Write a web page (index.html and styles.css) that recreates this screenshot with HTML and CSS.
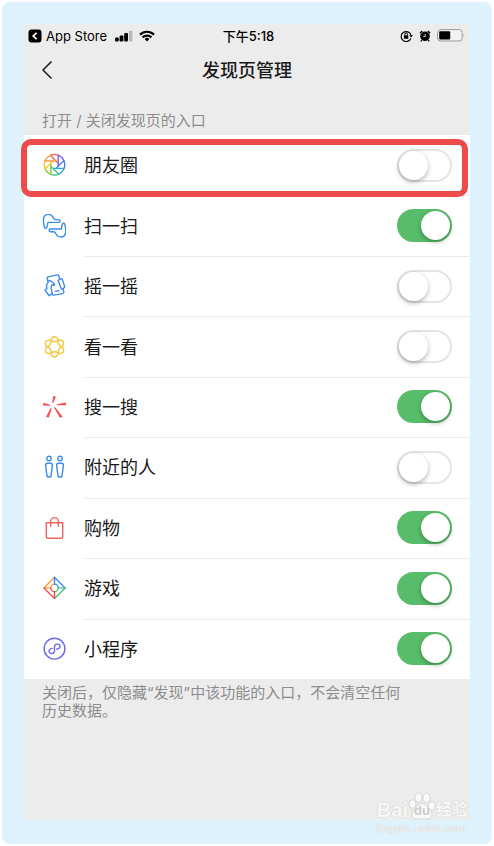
FILE: index.html
```html
<!DOCTYPE html>
<html lang="zh-CN">
<head>
    <meta charset="UTF-8">
    <meta name="viewport" content="width=device-width, initial-scale=1.0">
    <title>发现页管理</title>
    <link rel="stylesheet" href="styles.css">
</head>
<body>
    <div class="marco">
        <div class="pantalla">
            <header>
                <div class="status">
                    <div class="status-left">
                        <svg width="14" height="14" viewBox="0 0 14 14"><rect x="0.5" y="0.5" width="13" height="13" rx="3" fill="#000"/><path d="M8.6 3.8 5.2 7l3.4 3.2" fill="none" stroke="#fff" stroke-width="1.7"/></svg>
                        <span>App Store</span>
                        <svg class="signal" width="18" height="12" viewBox="0 0 18 12"><rect x="0" y="7.5" width="3.8" height="4" rx="1"/><rect x="4.6" y="5.5" width="3.8" height="6" rx="1"/><rect x="9.2" y="3" width="3.8" height="8.5" rx="1"/><rect x="14" y="0.8" width="3.4" height="10.7" rx="1" fill="#b9b9b9"/></svg>
                        <svg width="16" height="12" viewBox="0 0 16 12"><g fill="none" stroke="#000" stroke-width="2.2"><path d="M1 4.6a10 10 0 0 1 14 0"/><path d="M3.6 7.4a6.3 6.3 0 0 1 8.8 0"/></g><path d="M8 11.4 5.6 9a3.4 3.4 0 0 1 4.8 0z"/></svg>
                    </div>
                    <span class="time">下午5:18</span>
                    <div class="status-right">
                        <svg width="13" height="12" viewBox="0 0 13 12"><path d="M10.8 8.5A5 5 0 1 1 11 5.2" fill="none" stroke="#000" stroke-width="1.2"/><path d="M9.2 5.3h3.8l-1.9 2.3z"/><rect x="3.9" y="5.2" width="4.4" height="3.5" rx=".5"/><path d="M4.8 5.4V4.2a1.3 1.3 0 0 1 2.6 0v1.2" fill="none" stroke="#000"/></svg>
                        <svg width="12" height="12" viewBox="0 0 12 12"><circle cx="6" cy="6.3" r="4.8"/><path d="M.9 3.2 3.2 1M11.1 3.2 8.8 1M2.8 10.2l-1 1.2M9.2 10.2l1 1.2" stroke="#000" stroke-width="1.4"/><path d="M6.2 4v2.500H4.200" fill="none" stroke="#fff" stroke-width=".8"/></svg>
                        <svg width="28" height="13" viewBox="0 0 28 13"><rect x="0.6" y="0.6" width="24.6" height="11.4" rx="3" fill="#f2f2f2" stroke="#999"/><rect x="2.2" y="2.2" width="11" height="8.2" rx="1"/><path d="M26.6 4.4q1.4 1.9 0 3.8z" fill="#999"/></svg>
                    </div>
                </div>
                <div class="navbar">
                    <button class="back" aria-label="返回">
                        <svg width="12" height="20" viewBox="0 0 12 20"><path d="M10.500 1.500 2 10l8.500 8.500" fill="none" stroke="#1a1a1a" stroke-width="1.500"/></svg>
                    </button>
                    <h1>发现页管理</h1>
                </div>
            </header>
            <main>
                <h2>打开 / 关闭发现页的入口</h2>
                <ul class="lista">
                    <li class="marcado">
                        <label for="moments">
                            <svg class="icono" viewBox="0 0 24 24">
                                <defs><path id="blade" d="M3.700 1.500V-9.600A10.300 10.300 0 0 1 9.400-4.200"/></defs>
                                <g transform="translate(12.500 11.700)">
                                    <use href="#blade" stroke="#fa5d55" transform="rotate(-45)"/>
                                    <use href="#blade" stroke="#7a62ee"/>
                                    <use href="#blade" stroke="#4c7cf0" transform="rotate(45)"/>
                                    <use href="#blade" stroke="#35a5e8" transform="rotate(90)"/>
                                    <use href="#blade" stroke="#3ec48a" transform="rotate(135)"/>
                                    <use href="#blade" stroke="#8ccb3a" transform="rotate(180)"/>
                                    <use href="#blade" stroke="#f6c52c" transform="rotate(225)"/>
                                    <use href="#blade" stroke="#fb9a4a" transform="rotate(270)"/>
                                </g>
                            </svg>
                            <span>朋友圈</span>
                        </label>
                        <input type="checkbox" class="switch" id="moments">
                    </li>
                    <li>
                        <label for="scan">
                            <svg class="icono azul" viewBox="0 0 24 24">
                                <defs><path id="hand" d="M2.600 13.500C1.800 11 1.200 8 1.500 5.300 1.800 2 4 .4 6.500.4c2.300 0 3.800 1.200 4.800 3.200.6 1.400 1 2 2.400 2h3c1.900 0 1.900 2.800 0 2.800H6c-.7 1.800-.4 3.700-1.300 5.200-.6 1-1.700.9-2.100-.1z"/></defs>
                                <use href="#hand"/>
                                <use href="#hand" transform="rotate(180 12.600 11.700)"/>
                            </svg>
                            <span>扫一扫</span>
                        </label>
                        <input type="checkbox" class="switch" id="scan" checked>
                    </li>
                    <li>
                        <label for="shake">
                            <svg class="icono azul" viewBox="0 0 24 24">
                                <path d="M5.800 7.500 5.300 4.200q-.2-1 .9-1.300L15.400.9q1.200-.2 1.500.8l.5 2.500"/>
                                <path d="m16 6.300 2.800-1.500q1.100-.4 1.500.6l2.300 7q.2 1-.6 1.500l-1.700 1.200q-.8.3-1.200-.5z"/>
                                <path d="m21.200 15.200.6 2.700q.1 1.400-1.100 1.700l-9.200 1.500q-1.100.1-1.500-.9"/>
                                <path d="M7 21.700 3 16l2-1.300-.6-3.200 2.500-4.800q1.100-.4 2 .4l3.200 2.600q1.200 1.100 0 1.800l-2.400-.6-.6 3.300 1.200 5.400z"/>
                                <path d="m13.500 17.400 3.400-.7"/>
                            </svg>
                            <span>摇一摇</span>
                        </label>
                        <input type="checkbox" class="switch" id="shake">
                    </li>
                    <li>
                        <label for="look">
                            <svg class="icono amarillo" viewBox="0 0 24 24">
                                <defs><path id="petal" d="M-1.600-9.600Q0-10.900 1.600-9.600 3.900-8 3.600-6 3.400-4 4.300-2.500 5.200-.9 7-.1 8.900.6 9.100 3.400"/></defs>
                                <g transform="translate(12.500 11.800)">
                                    <use href="#petal"/>
                                    <use href="#petal" transform="rotate(60)"/>
                                    <use href="#petal" transform="rotate(120)"/>
                                    <use href="#petal" transform="rotate(180)"/>
                                    <use href="#petal" transform="rotate(240)"/>
                                    <use href="#petal" transform="rotate(300)"/>
                                </g>
                            </svg>
                            <span>看一看</span>
                        </label>
                        <input type="checkbox" class="switch" id="look">
                    </li>
                    <li>
                        <label for="search">
                            <svg class="icono relleno" viewBox="0 0 24 24">
                                <path d="m11.300.9 2.600.7-2.500 6.200-1.200-.3zM23.900 7.500v2.700l-9 .1-.1-1.100zM1.200 7.800l-.1 2.600 7 .4.200-1.100zM4.100 21.800l2.600 1 3-9.300-1.100-.5zM18.100 22.900l2.400-1.500-7.600-9.500-1 .7z"/>
                            </svg>
                            <span>搜一搜</span>
                        </label>
                        <input type="checkbox" class="switch" id="search" checked>
                    </li>
                    <li>
                        <label for="nearby">
                            <svg class="icono azul" viewBox="0 0 24 24">
                                <circle cx="7" cy="3.500" r="2.200"/><circle cx="18" cy="3.500" r="2.200"/>
                                <path d="M5.400 8.300h3.200q1.900.2 1.800 2L9 21q-.2 1-1.200 1H6.200q-1 0-1.200-1L3.600 10.300q-.1-1.800 1.800-2z"/>
                                <path d="M16.400 8.300h3.200q1.900.2 1.800 2L20 21q-.2 1-1.200 1h-1.600q-1 0-1.200-1l-1.400-10.700q-.1-1.800 1.800-2z"/>
                            </svg>
                            <span>附近的人</span>
                        </label>
                        <input type="checkbox" class="switch" id="nearby">
                    </li>
                    <li>
                        <label for="shop">
                            <svg class="icono rojo" viewBox="0 0 24 24">
                                <path d="M4.300 6.700h16.400v13.800q0 1.800-1.800 1.800H6.100q-1.800 0-1.800-1.800z"/>
                                <path d="M8.700 10.300V5.400a3.800 3.800 0 0 1 7.600 0v4.900"/>
                            </svg>
                            <span>购物</span>
                        </label>
                        <input type="checkbox" class="switch" id="shop" checked>
                    </li>
                    <li>
                        <label for="games">
                            <svg class="icono" viewBox="0 0 24 24">
                                <path stroke="#f79a3e" d="M12.500 1.300 1.900 11.900h6.800a3.800 3.800 0 0 1 3.800-3.800"/>
                                <path stroke="#3c8cf0" d="M23.100 11.900 12.500 1.300v6.800a3.800 3.800 0 0 1 3.800 3.800"/>
                                <path stroke="#45c381" d="m12.500 22.500 10.600-10.600h-6.800a3.800 3.800 0 0 1-3.800 3.800"/>
                                <path stroke="#f1524f" d="m1.900 11.900 10.600 10.600v-6.800a3.800 3.800 0 0 1-3.800-3.800"/>
                            </svg>
                            <span>游戏</span>
                        </label>
                        <input type="checkbox" class="switch" id="games" checked>
                    </li>
                    <li>
                        <label for="mini">
                            <svg class="icono morado" viewBox="0 0 24 24">
                                <circle cx="12.500" cy="11.700" r="10.400"/>
                                <path d="M14.700 12.200c2.300-.2 3.600-1.700 3.300-3.200-.6-2.700-5.500-2.500-5.500.8v4.100c0 3.200-4.900 3.400-5.500.7-.3-1.500 1-3 3.300-3.200"/>
                            </svg>
                            <span>小程序</span>
                        </label>
                        <input type="checkbox" class="switch" id="mini" checked>
                    </li>
                </ul>
                <p class="nota">关闭后，仅隐藏“发现”中该功能的入口，不会清空任何历史数据。</p>
            </main>
        </div>
        <div class="marca">
            <div class="marca-logo">
                <span class="bai">Bai</span>
                <span class="pata">
                    <svg width="28" height="28" viewBox="0 0 28 28"><g fill="#fafafa" stroke="#d6d6d6"><ellipse cx="4.500" cy="12" rx="3.400" ry="4.200"/><ellipse cx="10.500" cy="5.600" rx="3.500" ry="4.700"/><ellipse cx="18.500" cy="6" rx="3.500" ry="4.700"/><ellipse cx="23.700" cy="14" rx="3.400" ry="4.200"/><path d="M14 11.500c3 0 4.500 3 7 5.500 3 3 3.500 5 2.500 7.500-1.200 3-5 2.500-9.500 2.500s-8.300.5-9.500-2.500c-1-2.500-.5-4.500 2.500-7.500 2.500-2.500 4-5.500 7-5.500z"/></g></svg>
                    <b>du</b>
                </span>
                <span class="jingyan">经验</span>
            </div>
            <div class="marca-url">jingyan.baidu.com</div>
        </div>
    </div>
</body>
</html>
```

FILE: styles.css
```css
* {
    box-sizing: border-box;
}
body {
    font-family: Inter, "Noto Sans CJK SC", sans-serif;
    margin: 0;
    padding: 2px;
    min-height: 100vh;
    display: flex;
    background-color: #fff;
    color: #1a1a1a;
}
.marco {
    position: relative;
    flex: 1;
    display: flex;
    padding: 22px 22px 24px;
    border-radius: 8px;
    background-color: #ddf2fd;
}
.pantalla {
    flex: 1;
    background-color: #ececec;
}
/* Barra de estado */
.status {
    display: grid;
    grid-template-columns: 1fr auto 1fr;
    align-items: center;
    height: 23px;
    padding: 0 5px 0 4px;
    font-size: 13px;
    line-height: 20px;
    color: #000;
}
.status-left,
.status-right {
    display: flex;
    align-items: center;
    gap: 4px;
}
.status-right {
    justify-content: flex-end;
    gap: 6px;
}
.signal {
    margin: 0 2px 0 4px;
}
.time {
    padding-left: 4px;
    font-weight: 500;
}
.navbar {
    display: grid;
    grid-template-columns: 48px 1fr 48px;
    align-items: center;
    height: 46px;
}
.back {
    display: flex;
    padding: 0 0 0 17px;
    border: none;
    background: none;
    cursor: pointer;
}
h1 {
    margin: 0;
    padding-top: 2px;
    font-size: 18px;
    line-height: 26px;
    font-weight: 500;
    text-align: center;
}
h2 {
    margin: 0;
    padding: 18px 18px 4px;
    font-size: 15px;
    line-height: 20px;
    font-weight: 400;
    color: #8c8c8c;
}
/* Lista de entradas */
.lista {
    display: grid;
    grid-auto-rows: 1fr;
    min-height: 544px;
    margin: 0;
    padding: 0;
    list-style: none;
    background-color: #fff;
}
.lista li {
    position: relative;
    display: flex;
    align-items: center;
    padding: 0 18px;
}
.lista li + li::before {
    content: "";
    position: absolute;
    top: 0;
    left: 60px;
    right: 0;
    border-top: 1px solid #ebebeb;
}
.lista label {
    flex: 1;
    display: flex;
    align-items: center;
    gap: 18px;
    font-size: 18px;
    line-height: 26px;
}
.lista label span {
    padding-top: 2px;
}
/* Recuadro rojo sobre la primera fila */
.marcado::after {
    content: "";
    position: absolute;
    z-index: 1;
    top: 4px;
    right: 2px;
    bottom: -2px;
    left: -3px;
    border: 6px solid #ee4b4a;
    border-radius: 10px;
    pointer-events: none;
}
.icono {
    width: 24px;
    height: 24px;
    fill: none;
    stroke-width: 1.4;
    stroke-linejoin: round;
    stroke-linecap: round;
}
.azul {
    stroke: #3d8bea;
}
.amarillo {
    stroke: #f7c43a;
}
.rojo {
    stroke: #f0625f;
}
.morado {
    stroke: #6c6cec;
}
.relleno {
    fill: #f0524f;
}
.switch {
    appearance: none;
    width: 55px;
    height: 33px;
    margin: 0;
    padding: 0;
    border: 2px solid #e4e4e4;
    border-radius: 17px;
    background-color: #fff;
    cursor: pointer;
}
.switch::before {
    content: "";
    display: block;
    width: 29px;
    height: 29px;
    border-radius: 50%;
    background-color: #fff;
    box-shadow: 0 2px 5px rgba(0, 0, 0, 0.3);
}
.switch:checked {
    border-color: #57bd6a;
    background-color: #57bd6a;
}
.switch:checked::before {
    margin-left: 22px;
}
.nota {
    margin: 0;
    padding: 5px 58px 0 18px;
    font-size: 15px;
    line-height: 18px;
    color: #8c8c8c;
}
/* Marca de agua */
.marca {
    position: absolute;
    right: 24px;
    bottom: 8px;
    font-family: "Liberation Sans", "Noto Sans CJK SC", sans-serif;
    color: #f8f8f8;
    text-shadow: 0 0 1px #ccc, 0 0 1px #ccc;
}
.marca-logo {
    display: flex;
    align-items: flex-end;
    line-height: 20px;
}
.bai {
    font-size: 20px;
    font-weight: bold;
}
.pata {
    display: grid;
    justify-items: center;
    align-items: end;
}
.pata > * {
    grid-area: 1 / 1;
}
.pata b {
    font-size: 13px;
    line-height: 18px;
    color: #ccc;
    text-shadow: none;
}
.jingyan {
    font-size: 16px;
    font-weight: bold;
}
.marca-url {
    font-size: 11px;
    line-height: 16px;
}
```
